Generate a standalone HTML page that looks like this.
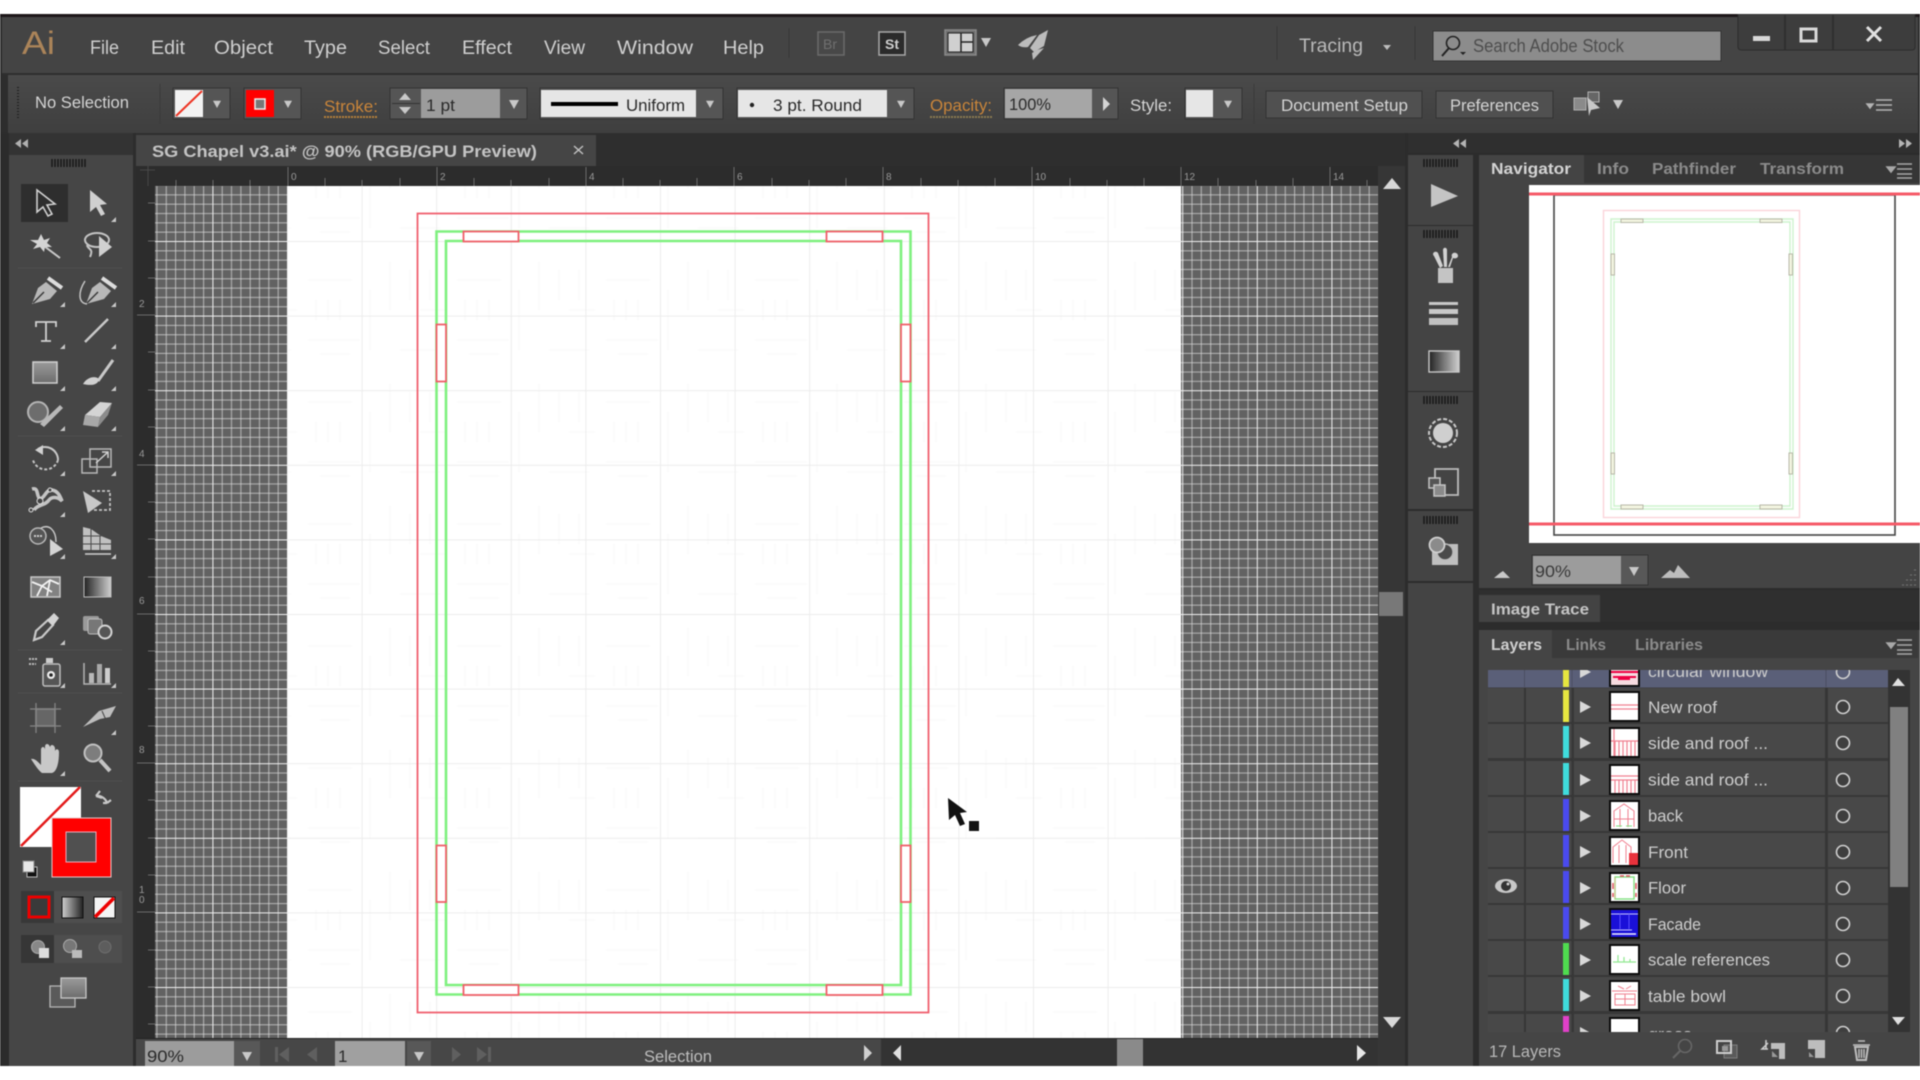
<!DOCTYPE html>
<html><head><meta charset="utf-8"><title>Illustrator</title>
<style>
html,body{margin:0;padding:0;background:#fff;width:1920px;height:1080px;overflow:hidden}
svg{position:absolute;left:0;top:0;filter:blur(.6px)}
text{font-family:"Liberation Sans",sans-serif}
.m{font-size:19px;fill:#cfcfcf}
.c{font-size:17px;fill:#d4d4d4}
.d{font-size:17px;fill:#2a2a2a}
.o{font-size:17px;fill:#c9853a}
.t{font-size:16px;font-weight:bold;fill:#8b8b8b}
.l{font-size:17px;fill:#cdcdcd}
.r{font-size:10px;fill:#999}
.s{fill:none;stroke:#c4c4c4;stroke-width:2}
</style></head><body>
<svg width="1920" height="1080" viewBox="0 0 1920 1080" xmlns="http://www.w3.org/2000/svg">
<defs>
<pattern id="pb" patternUnits="userSpaceOnUse" x="287" y="241" width="74.6" height="74.6">
<rect width="74.6" height="74.6" fill="#626262"/>
<g stroke="#dadada" stroke-width="1" stroke-opacity=".72">
<path d="M.5 0V75M9.8 0V75M19.1 0V75M28.5 0V75M37.8 0V75M47.1 0V75M56.4 0V75M65.8 0V75"/>
<path d="M0 .5H75M0 9.8H75M0 19.1H75M0 28.5H75M0 37.8H75M0 47.1H75M0 56.4H75M0 65.8H75"/>
</g>
<path d="M0 .5H75M.5 0V75" stroke="#f2f2f2" stroke-width="1"/>
</pattern>
<pattern id="ag" patternUnits="userSpaceOnUse" x="287" y="241" width="74.6" height="74.6">
<path d="M.5 0V75M0 .5H75" stroke="#ececec" stroke-width="1" fill="none"/>
</pattern>
<pattern id="ghost" patternUnits="userSpaceOnUse" x="300" y="250" width="149" height="122">
<path d="M8 30H52M8 90H60M90 12V60M120 60H146M100 100H140M70 40V100M16 50V70M28 50V70M40 50V70M110 20V50M130 20V50M20 104H50" stroke="#f9f9f9" stroke-width="1" fill="none"/>
</pattern>
<linearGradient id="gr" x1="0" x2="1"><stop offset="0" stop-color="#222"/><stop offset="1" stop-color="#cfcfcf"/></linearGradient>
<linearGradient id="rc" x1="0" y1="0" x2="0" y2="1"><stop offset="0" stop-color="#9a9a9a"/><stop offset="1" stop-color="#6d6d6d"/></linearGradient>
<linearGradient id="bar" x1="0" y1="0" x2="0" y2="1"><stop offset="0" stop-color="#4a4a4a"/><stop offset="1" stop-color="#3f3f3f"/></linearGradient>
<clipPath id="lc"><rect x="1488" y="670" width="400" height="362"/></clipPath>
<g id="tri"><path d="M0 0L5-5V0Z" fill="#c8c8c8"/></g>
<g id="arrw"><path d="M-5-4H5L0 5Z" fill="#c8c8c8"/></g>
<g id="grip"><path d="M0 0V8M3 0V8M6 0V8M9 0V8M12 0V8M15 0V8M18 0V8M21 0V8M24 0V8M27 0V8M30 0V8M33 0V8" stroke="#161616" stroke-width="1.4"/></g>
<g id="row">
<rect x="1488" y="0" width="36" height="34" fill="#484848"/>
<rect x="1526" y="0" width="46" height="34" fill="#484848"/>
<rect x="1574" y="0" width="251" height="34" fill="#484848"/>
<rect x="1828" y="0" width="60" height="34" fill="#484848"/>
<path d="M1580 13L1591 19L1580 25Z" fill="#d8d8d8"/>
<rect x="1609" y="3" width="31" height="31" fill="#0c0c0c"/>
<rect x="1611" y="5" width="27" height="27" fill="#fff"/>
<circle cx="1843" cy="19" r="6.5" fill="#3e3e3e" stroke="#d0d0d0" stroke-width="1.6"/>
</g>
</defs>

<rect width="1920" height="1080" fill="#fff"/>
<rect y="14" width="1920" height="1052" fill="#2d2d2d"/>
<rect y="14" width="1920" height="3" fill="#1d1719"/>

<!-- title bar -->
<rect x="2" y="17" width="1916" height="57" fill="#444"/>
<rect x="2" y="73" width="1916" height="1" fill="#2f2f2f"/>
<text x="22" y="54" font-size="32" fill="#ab8459" textLength="33" lengthAdjust="spacingAndGlyphs">Ai</text>
<text class="m" x="90" y="54" textLength="29" lengthAdjust="spacingAndGlyphs">File</text>
<text class="m" x="151" y="54" textLength="34" lengthAdjust="spacingAndGlyphs">Edit</text>
<text class="m" x="214" y="54" textLength="59" lengthAdjust="spacingAndGlyphs">Object</text>
<text class="m" x="304" y="54" textLength="43" lengthAdjust="spacingAndGlyphs">Type</text>
<text class="m" x="378" y="54" textLength="52" lengthAdjust="spacingAndGlyphs">Select</text>
<text class="m" x="462" y="54" textLength="50" lengthAdjust="spacingAndGlyphs">Effect</text>
<text class="m" x="544" y="54" textLength="41" lengthAdjust="spacingAndGlyphs">View</text>
<text class="m" x="617" y="54" textLength="76" lengthAdjust="spacingAndGlyphs">Window</text>
<text class="m" x="723" y="54" textLength="41" lengthAdjust="spacingAndGlyphs">Help</text>
<path d="M789 28V58M1277 26V60M1415 26V60" stroke="#383838" stroke-width="1"/>
<rect x="818" y="32" width="26" height="23" fill="#484848" stroke="#6a6a6a" stroke-width="1.5"/>
<text x="823" y="49" font-size="14" fill="#707070">Br</text>
<rect x="879" y="32" width="26" height="23" fill="#2b2b2b" stroke="#a8a8a8" stroke-width="1.5"/>
<text x="885" y="49" font-size="14" font-weight="bold" fill="#cfcfcf">St</text>
<rect x="945" y="30" width="31" height="25" fill="#6e6e6e" stroke="#8a8a8a" stroke-width="1.5"/>
<rect x="948" y="33" width="25" height="19" fill="#d0d0d0" stroke="#222" stroke-width="1"/>
<path d="M961 33V52M961 42H973" stroke="#222" stroke-width="1.5"/>
<use href="#arrw" x="986" y="42"/>
<path d="M1018 45Q1026 37 1037 35L1028 47Q1022 48 1018 45Z" fill="#bcbcbc"/>
<path d="M1048 30L1039 35L1030 48L1034 52L1044 46Z" fill="#bcbcbc"/>
<path d="M1044 48L1033 60L1032 53L1037 50Z" fill="#bcbcbc"/>
<text x="1299" y="52" font-size="19" fill="#b9b9b9" textLength="64" lengthAdjust="spacingAndGlyphs">Tracing</text>
<path d="M1383 45H1391L1387 50Z" fill="#bcbcbc"/>
<rect x="1433" y="31" width="288" height="30" fill="#8c8c8c" stroke="#333" stroke-width="1"/>
<circle cx="1453" cy="43" r="6.5" fill="none" stroke="#222" stroke-width="1.6"/><path d="M1449 48L1442 56" stroke="#222" stroke-width="2"/><path d="M1460 52H1466L1463 55Z" fill="#222"/>
<text x="1473" y="52" font-size="18" fill="#4e4e4e" textLength="151" lengthAdjust="spacingAndGlyphs">Search Adobe Stock</text>
<path d="M1738 14H1915V47Q1915 50 1912 50H1742Q1738 50 1738 47Z" fill="#3d3d3d" stroke="#2c2c2c"/>
<path d="M1785 15V50M1833 15V50" stroke="#2c2c2c" stroke-width="1.5"/>
<rect x="1753" y="36" width="17" height="5" fill="#d8d8d8"/>
<rect x="1801" y="29" width="15" height="12" fill="none" stroke="#d8d8d8" stroke-width="3"/>
<path d="M1867 27L1881 41M1881 27L1867 41" stroke="#e0e0e0" stroke-width="3"/>

<!-- control bar -->
<rect x="8" y="75" width="1910" height="58" fill="url(#bar)"/>
<path d="M18 87V120" stroke="#1e1e1e" stroke-width="2" stroke-dasharray="1 2"/>
<path d="M160 84V124M1254 84V124" stroke="#3a3a3a"/>
<text class="c" x="35" y="108" textLength="94" lengthAdjust="spacingAndGlyphs">No Selection</text>
<rect x="173" y="88" width="57" height="31" fill="#555" stroke="#333"/>
<rect x="175" y="90" width="28" height="27" fill="#f2f2f2"/>
<path d="M176 116L202 91" stroke="#e32" stroke-width="2"/>
<use href="#arrw" x="217" y="104" transform="translate(43.4 20.8) scale(.8)"/>
<rect x="244" y="88" width="57" height="31" fill="#555" stroke="#333"/>
<rect x="246" y="90" width="28" height="27" fill="#f00"/>
<rect x="255" y="99" width="10" height="10" fill="#777" stroke="#eee" stroke-width="1.5"/>
<use href="#arrw" x="288" y="104" transform="translate(57.6 20.8) scale(.8)"/>
<text class="o" x="324" y="112" textLength="54" lengthAdjust="spacingAndGlyphs">Stroke:</text>
<path d="M324 117H378" stroke="#b5803a" stroke-width="2" stroke-dasharray="2 1"/>
<rect x="390" y="88" width="137" height="31" fill="#555" stroke="#333"/>
<path d="M399 100L405 93L411 100ZM399 107L405 114L411 107Z" fill="#c8c8c8"/>
<path d="M392 103.500H420" stroke="#333"/>
<rect x="421" y="89" width="79" height="29" fill="#9c9c9c"/>
<text class="d" x="426" y="111" textLength="29" lengthAdjust="spacingAndGlyphs">1 pt</text>
<use href="#arrw" x="514" y="104"/>
<rect x="540" y="88" width="183" height="31" fill="#555" stroke="#333"/>
<rect x="541" y="90" width="155" height="27" fill="#e6e6e6"/>
<rect x="551" y="102" width="67" height="4" fill="#000"/>
<text class="d" x="626" y="111" textLength="59" lengthAdjust="spacingAndGlyphs">Uniform</text>
<use href="#arrw" x="710" y="104" transform="translate(142 20.800) scale(.8)"/>
<rect x="737" y="88" width="177" height="31" fill="#555" stroke="#333"/>
<rect x="738" y="90" width="149" height="27" fill="#e6e6e6"/>
<circle cx="752" cy="105" r="2.2" fill="#222"/>
<text class="d" x="773" y="111" textLength="89" lengthAdjust="spacingAndGlyphs">3 pt. Round</text>
<use href="#arrw" x="901" y="104" transform="translate(180.200 20.800) scale(.8)"/>
<text class="o" x="930" y="111" textLength="62" lengthAdjust="spacingAndGlyphs">Opacity:</text>
<path d="M930 117H992" stroke="#8a7a50" stroke-width="2" stroke-dasharray="2 1"/>
<rect x="1004" y="88" width="114" height="31" fill="#555" stroke="#333"/>
<rect x="1005" y="89" width="87" height="29" fill="#a6a6a6"/>
<text class="d" x="1009" y="110" textLength="42" lengthAdjust="spacingAndGlyphs">100%</text>
<path d="M1103 97L1110 104L1103 111Z" fill="#d4d4d4"/>
<text class="c" x="1130" y="111" textLength="42" lengthAdjust="spacingAndGlyphs">Style:</text>
<rect x="1185" y="88" width="57" height="31" fill="#555" stroke="#333"/>
<rect x="1186" y="90" width="27" height="27" fill="#e6e6e6"/>
<use href="#arrw" x="1228" y="104" transform="translate(245.600 20.800) scale(.8)"/>
<rect x="1266" y="91" width="156" height="27" fill="#505050" stroke="#333"/>
<text class="c" x="1281" y="111" textLength="127" lengthAdjust="spacingAndGlyphs">Document Setup</text>
<rect x="1436" y="91" width="117" height="27" fill="#505050" stroke="#333"/>
<text class="c" x="1450" y="111" textLength="89" lengthAdjust="spacingAndGlyphs">Preferences</text>
<rect x="1574" y="98" width="12" height="12" fill="#8a8a8a" stroke="#b0b0b0"/>
<rect x="1588" y="92" width="11" height="10" fill="#666" stroke="#b0b0b0"/>
<path d="M1587 97L1600 108L1591 110L1589 116Z" fill="#c8c8c8"/>
<use href="#arrw" x="1618" y="104"/>
<path d="M1867 104H1873L1870 108ZM1876 100H1892M1876 105H1892M1876 110H1892" stroke="#b4b4b4" fill="#b4b4b4" stroke-width="1.500"/>

<!-- dark strip & tool bar -->
<rect y="133" width="1920" height="33" fill="#2e2e2e"/>
<rect x="0" y="133" width="9" height="933" fill="#2b2b2b"/>
<rect x="9" y="133" width="124" height="22" fill="#333"/>
<path d="M21 139L15 143.500L21 148ZM28 139L22 143.500L28 148Z" fill="#b0b0b0"/>
<rect x="9" y="155" width="124" height="911" fill="#464646"/>
<rect x="133" y="133" width="3" height="933" fill="#2d2d2d"/>
<use href="#grip" transform="translate(52 159)"/>
<path d="M18 268H122M18 436H122M18 650H122M18 693H122M18 781H122" stroke="#505050"/>
<rect x="21" y="184" width="47" height="38" fill="#2e2e2e"/>

<!-- tools -->
<g>
<path d="M37 190V212L43 207L48 216L52 214L47 205L55 204Z" fill="#2e2e2e" stroke="#d0d0d0" stroke-width="1.600"/>
<path d="M90 190V212L96 207L101 216L105 214L100 205L107 204Z" fill="#d0d0d0"/>
<path d="M44 246L60 258" stroke="#c8c8c8" stroke-width="2"/>
<path d="M41 234L44 240L50 238L47 243L52 247L45 247L44 252L40 247L33 249L37 244L30 240L38 240Z" fill="#d4d4d4"/>
<ellipse cx="97" cy="240" rx="12" ry="7" class="s"/>
<path d="M87 245C88 250 94 248 90 257" class="s"/>
<path d="M99 236V257L112 247Z" fill="#d0d0d0"/>
<path d="M32 304L38 288L46 282L57 291L50 299Z" fill="#b8b8b8"/><path d="M33 303L44 292" stroke="#3a3a3a" stroke-width="1.500"/><path d="M48 278L62 288" stroke="#ddd" stroke-width="4"/>
<path d="M86 304L92 288L100 282L111 291L104 299Z" fill="#b8b8b8"/><path d="M87 303L98 292" stroke="#3a3a3a" stroke-width="1.500"/><path d="M102 278L116 288" stroke="#ddd" stroke-width="4"/><path d="M85 281C78 292 78 303 87 304" fill="none" stroke="#c4c4c4" stroke-width="1.500"/>
<path d="M36 327V322H56V327M46 322V341M41 341H51" fill="none" stroke="#d0d0d0" stroke-width="1.800"/>
<path d="M85 342L108 319" stroke="#c8c8c8" stroke-width="2.500"/>
<rect x="33" y="362" width="24" height="21" fill="url(#rc)" stroke="#d0d0d0" stroke-width="1.500"/>
<path d="M98 381L113 360" stroke="#c8c8c8" stroke-width="3"/><path d="M83 384C88 376 96 376 99 379C98 385 92 386 83 384Z" fill="#d0d0d0"/>
<circle cx="38" cy="412" r="10" fill="#6d6d6d" stroke="#b4b4b4" stroke-width="2"/>
<path d="M40 424L60 405L63 408L44 427Z" fill="#b8b8b8"/>
<path d="M85 415L100 402L112 403L100 417Z" fill="#d4d4d4"/>
<path d="M85 415L100 417L98 427L83 425Z" fill="#a8a8a8"/>
<path d="M100 417L112 403L108 415L98 427Z" fill="#8c8c8c"/>
<path d="M38 449A13 13 0 0 1 58 460" fill="none" stroke="#c8c8c8" stroke-width="2"/>
<path d="M43 445L35 450L43 455Z" fill="#d0d0d0"/>
<path d="M58 460A13 13 0 0 1 33 460" fill="none" stroke="#c4c4c4" stroke-width="2" stroke-dasharray="3 2"/>
<rect x="90" y="449" width="21" height="18" fill="none" stroke="#b8b8b8" stroke-width="1.500"/>
<rect x="82" y="459" width="15" height="14" fill="none" stroke="#b8b8b8" stroke-width="1.500"/>
<path d="M96 463L108 452M102 452H108V458" stroke="#d0d0d0" fill="none" stroke-width="1.500"/>
<path d="M32 489C39 487 36 496 40 499C45 498 46 489 52 490C58 491 60 496 62 501C58 497 52 496 49 500C45 506 38 504 34 510" fill="none" stroke="#c4c4c4" stroke-width="3.500"/>
<circle cx="40" cy="501" r="3" fill="#444" stroke="#ddd"/><circle cx="31" cy="510" r="2" fill="#444" stroke="#ddd"/><circle cx="50" cy="490" r="2" fill="#444" stroke="#ddd"/>
<path d="M83 491L102 503L88 513Z" fill="#c8c8c8"/>
<path d="M92 491H110V510H94" fill="none" stroke="#c4c4c4" stroke-width="1.800" stroke-dasharray="3 2"/>
<circle cx="38" cy="536" r="8" fill="#555" stroke="#b8b8b8" stroke-width="1.500"/>
<path d="M34 536h8" stroke="#ccc" stroke-width="2" stroke-dasharray="2 1"/>
<path d="M41 528C49 524 56 530 56 542" fill="none" stroke="#c4c4c4" stroke-width="1.500"/>
<path d="M50 539V556L63 549Z" fill="#d4d4d4"/>
<path d="M83 527L91 529L101 536L111 540V550H83Z" fill="#c0c0c0"/>
<path d="M91 529V550M100 536V550M83 536H101M83 544H111" stroke="#4a4a4a"/>
<path d="M85 554H111" stroke="#d0d0d0" stroke-width="1.500"/>
<rect x="31" y="577" width="29" height="20" fill="#828282" stroke="#c8c8c8" stroke-width="1.500"/>
<path d="M32 582L42 586L37 596M42 586L50 580L59 584M50 580L47 596M42 586L52 592" stroke="#f2f2f2" fill="none" stroke-width="1.800"/>
<rect x="84" y="577" width="27" height="20" fill="url(#gr)" stroke="#bcbcbc"/>
<path d="M34 640L36 631L48 620L53 625L42 637Z" fill="none" stroke="#c8c8c8" stroke-width="2.200"/>
<path d="M47 620L54 613L59 618L53 626Z" fill="#d4d4d4"/>
<rect x="83" y="616" width="16" height="15" rx="2" fill="#9a9a9a"/>
<rect x="88" y="619" width="14" height="15" rx="2" fill="#777" stroke="#bbb"/>
<circle cx="105" cy="632" r="6.500" fill="#555" stroke="#d4d4d4" stroke-width="2"/>
<path d="M29 659H38M29 664H36" stroke="#bbb" stroke-width="2" stroke-dasharray="2 1"/>
<rect x="46" y="658" width="7" height="5" fill="#ccc"/>
<rect x="43" y="664" width="17" height="22" rx="2" fill="#555" stroke="#bdbdbd" stroke-width="1.500"/>
<circle cx="51" cy="675" r="4" fill="#eee"/><circle cx="51" cy="675" r="1.800" fill="#222"/>
<path d="M84 663V684H111" fill="none" stroke="#b4b4b4" stroke-width="1.500"/>
<rect x="89" y="673" width="5" height="10" fill="#b8b8b8"/><rect x="97" y="664" width="5" height="19" fill="#a8a8a8"/><rect x="105" y="668" width="5" height="15" fill="#cdcdcd"/>
<rect x="36" y="709" width="19" height="17" fill="#666" stroke="#999" stroke-width="1.400"/>
<path d="M36 703V733M55 703V733M30 709H61M30 726H61" stroke="#848484" stroke-width="1.300"/>
<path d="M83 727L99 711L116 706L110 717L100 719Z" fill="#bdbdbd"/><path d="M102 711L106 720" stroke="#444"/>
<path d="M31 759C35 758 38 762 41 765V750C41 746 45 746 45 750V758V747C45 743 49 743 50 747V758V748C50 744 54 744 55 748V758V751C56 748 59 749 59 752C59 765 56 772 52 773H42C38 770 35 765 31 759Z" fill="#c8c8c8"/>
<circle cx="93" cy="753" r="8.500" fill="#7d7d7d" stroke="#c0c0c0" stroke-width="2"/>
<path d="M100 760L110 771" stroke="#c4c4c4" stroke-width="4"/>
</g>
<g>
<use href="#tri" x="111" y="222"/><use href="#tri" x="60" y="307"/><use href="#tri" x="111" y="307"/>
<use href="#tri" x="60" y="349"/><use href="#tri" x="111" y="349"/><use href="#tri" x="60" y="391"/><use href="#tri" x="111" y="391"/>
<use href="#tri" x="60" y="431"/><use href="#tri" x="111" y="431"/><use href="#tri" x="60" y="476"/><use href="#tri" x="111" y="476"/>
<use href="#tri" x="60" y="517"/><use href="#tri" x="60" y="559"/><use href="#tri" x="111" y="559"/>
<use href="#tri" x="60" y="645"/><use href="#tri" x="60" y="688"/><use href="#tri" x="111" y="688"/><use href="#tri" x="111" y="735"/><use href="#tri" x="60" y="776"/>
</g>

<!-- fill / stroke -->
<rect x="20" y="787" width="61" height="60" fill="#fff"/>
<path d="M21 846L80 787" stroke="#e31a1a" stroke-width="2.500"/>
<rect x="52" y="818" width="59" height="59" fill="#f00" stroke="#e8c8c8" stroke-width="1"/>
<rect x="66" y="832" width="30" height="30" fill="#505050" stroke="#eab" stroke-width="1"/>
<path d="M96 796C101 795 106 799 107 803M96 796L100 791M96 796L102 798M107 803L103 803M107 803L111 800" fill="none" stroke="#c8c8c8" stroke-width="2.200"/>
<rect x="27" y="867" width="10" height="10" fill="#111" stroke="#bbb"/>
<rect x="23" y="861" width="11" height="11" fill="#e8e8e8" stroke="#888"/>
<rect x="21" y="891" width="101" height="32" fill="#4e4e4e"/>
<rect x="21" y="891" width="33" height="32" fill="#383838"/>
<rect x="29" y="897" width="20" height="20" fill="#3a3a3a" stroke="#e00" stroke-width="3"/>
<rect x="62" y="897" width="21" height="21" fill="url(#gr)" stroke="#111" transform="rotate(180 72.500 907.500)"/>
<rect x="94" y="897" width="21" height="21" fill="#f4f4f4" stroke="#111"/>
<path d="M95 917L114 898" stroke="#e00" stroke-width="3.500"/>
<rect x="21" y="935" width="101" height="28" fill="#4e4e4e"/>
<rect x="21" y="935" width="33" height="28" fill="#363636"/>
<circle cx="38" cy="947" r="6.500" fill="#888" stroke="#aaa"/>
<rect x="39" y="948" width="10" height="10" fill="#ddd"/>
<circle cx="70" cy="946" r="6.500" fill="#777" stroke="#aaa"/>
<rect x="72" y="950" width="10" height="8" fill="#bbb"/>
<circle cx="105" cy="947" r="6" fill="#5d5d5d" stroke="#6e6e6e"/>
<path d="M61 986H50V1007H75V998" fill="#5a5a5a" stroke="#b8b8b8" stroke-width="1.300"/>
<rect x="61" y="978" width="25" height="20" fill="url(#rc)" stroke="#c8c8c8" stroke-width="1.300"/>

<!-- document tab -->
<rect x="136" y="135" width="460" height="31" fill="#454545"/>
<text x="152" y="157" font-size="16.500" font-weight="bold" fill="#c4c4c4" textLength="385" lengthAdjust="spacingAndGlyphs">SG Chapel v3.ai* @ 90% (RGB/GPU Preview)</text>
<path d="M574 146L583 154M583 146L574 154" stroke="#c0c0c0" stroke-width="1.500"/>

<!-- rulers -->
<rect x="136" y="166" width="1242" height="20" fill="#2c2c2c"/>
<rect x="136" y="166" width="19" height="872" fill="#2c2c2c"/>
<path d="M140 170H155M148 166V186" stroke="#484848"/>
<g stroke="#6c6c6c" stroke-width="1">
<path d="M288 167V186M437 167V186M586 167V186M734 167V186M883 167V186M1032 167V186M1181 167V186M1330 167V186"/>
<path d="M176 180V186M213 180V186M250 180V186M325 178V186M362 180V186M400 178V186M474 178V186M511 180V186M549 178V186M623 178V186M660 180V186M697 178V186M772 178V186M809 180V186M846 178V186M921 178V186M958 180V186M995 178V186M1070 178V186M1107 180V186M1144 178V186M1218 178V186M1256 180V186M1293 178V186M1367 180V186"/>
<path d="M137 315H155M137 465H155M137 614H155M137 763H155M137 912H155"/>
<path d="M148 203H155M148 241H155M148 278H155M148 352H155M148 390H155M148 427H155M148 502H155M148 539H155M148 577H155M148 651H155M148 689H155M148 726H155M148 800H155M148 838H155M148 875H155M148 950H155M148 987H155M148 1024H155"/>
</g>
<g>
<text class="r" x="291" y="180">0</text><text class="r" x="440" y="180">2</text><text class="r" x="589" y="180">4</text><text class="r" x="737" y="180">6</text><text class="r" x="886" y="180">8</text><text class="r" x="1035" y="180">10</text><text class="r" x="1184" y="180">12</text><text class="r" x="1333" y="180">14</text>
<text class="r" x="139" y="307">2</text><text class="r" x="139" y="457">4</text><text class="r" x="139" y="604">6</text><text class="r" x="139" y="753">8</text><text class="r" x="139" y="893">1</text><text class="r" x="139" y="903">0</text>
</g>

<!-- pasteboard & artboard -->
<rect x="155" y="186" width="1223" height="852" fill="url(#pb)"/>
<rect x="288" y="186" width="893" height="852" fill="#fff"/>
<rect x="288" y="186" width="893" height="852" fill="url(#ghost)"/>
<rect x="288" y="186" width="893" height="852" fill="url(#ag)"/>
<rect x="417.500" y="213.500" width="511" height="799" fill="none" stroke="#f0606e" stroke-width="1.800"/>
<path d="M436.500 231.500H910.500V994.500H436.500Z" fill="none" stroke="#7ff07f" stroke-width="2.600"/>
<path d="M446 241H901V985H446Z" fill="none" stroke="#7ff07f" stroke-width="2.600"/>
<g fill="#fff" stroke="#f05f6a" stroke-width="1.800">
<rect x="463.500" y="231.500" width="55" height="10"/><rect x="826.500" y="231.500" width="56" height="10"/>
<rect x="463.500" y="985" width="55" height="10"/><rect x="826.500" y="985" width="56" height="10"/>
<rect x="436.500" y="324.500" width="9.500" height="57"/><rect x="901" y="324.500" width="9.500" height="57"/>
<rect x="436.500" y="845.500" width="9.500" height="56.500"/><rect x="901" y="845.500" width="9.500" height="56.500"/>
</g>
<path d="M948 798L949 820L955 815L960 826L965 824L960 813L967 812Z" fill="#111"/>
<rect x="969" y="821" width="10" height="10" fill="#111"/>

<!-- scroll right -->
<rect x="1378" y="166" width="27" height="900" fill="#363636"/>
<path d="M1383 189L1392 178L1401 189Z" fill="#d8d8d8"/>
<path d="M1383 1017L1392 1028L1401 1017Z" fill="#d8d8d8"/>
<rect x="1379" y="592" width="24" height="24" fill="#787878"/>

<!-- status bar -->
<rect x="136" y="1038" width="745" height="28" fill="#474747"/>
<rect x="136" y="1038" width="1242" height="1" fill="#222"/>
<rect x="145" y="1041" width="89" height="25" fill="#9c9c9c"/>
<text class="d" x="147" y="1062" textLength="37" lengthAdjust="spacingAndGlyphs">90%</text>
<rect x="234" y="1041" width="26" height="25" fill="#585858"/>
<use href="#arrw" x="247" y="1056"/>
<path d="M275 1047H278V1062H275ZM289 1047V1062L279 1054.500ZM317 1047V1062L307 1054.500Z" fill="#5f5f5f"/>
<rect x="335" y="1041" width="70" height="25" fill="#a0a0a0"/>
<text class="d" x="338" y="1062">1</text>
<rect x="407" y="1041" width="24" height="25" fill="#585858"/>
<use href="#arrw" x="419" y="1056"/>
<path d="M452 1047V1062L461 1054.500ZM477 1047V1062L487 1054.500ZM488 1047H491V1062H488Z" fill="#5f5f5f"/>
<text x="644" y="1062" font-size="17" fill="#bdbdbd" textLength="68" lengthAdjust="spacingAndGlyphs">Selection</text>
<path d="M864 1045L872 1053L864 1061Z" fill="#d0d0d0"/>
<rect x="881" y="1039" width="497" height="27" fill="#333"/>
<path d="M901 1045L893 1053L901 1061Z" fill="#e0e0e0"/>
<rect x="1117" y="1039" width="26" height="27" fill="#8a8a8a"/>
<path d="M1357 1045L1366 1053L1357 1061Z" fill="#e8e8e8"/>

<!-- right dock -->
<rect x="1405" y="133" width="515" height="933" fill="#2c2c2c"/>
<rect x="1408" y="133" width="512" height="20" fill="#2f2f2f"/>
<path d="M1459 139L1453 143.500L1459 148ZM1466 139L1460 143.500L1466 148Z" fill="#b4b4b4"/>
<path d="M1899 139L1905 143.500L1899 148ZM1906 139L1912 143.500L1906 148Z" fill="#b4b4b4"/>
<rect x="1408" y="155" width="65" height="70" fill="#444"/>
<rect x="1408" y="226" width="65" height="165" fill="#444"/>
<rect x="1408" y="392" width="65" height="117" fill="#444"/>
<rect x="1408" y="511" width="65" height="70" fill="#444"/>
<rect x="1408" y="583" width="65" height="483" fill="#444"/>
<use href="#grip" transform="translate(1424 159)"/><use href="#grip" transform="translate(1424 230)"/><use href="#grip" transform="translate(1424 396)"/><use href="#grip" transform="translate(1424 516)"/>
<path d="M1431 184L1458 196L1431 207Z" fill="#c4c4c4"/>
<path d="M1438 268H1453V283H1438Z" fill="#c4c4c4"/>
<path d="M1440 268L1434 256C1431 253 1436 250 1438 253L1443 266ZM1444 267L1443 250C1443 247 1447 247 1447 250L1447 267ZM1448 267L1452 257C1450 252 1458 251 1458 256C1458 258 1455 259 1453 258L1450 267Z" fill="#d2d2d2"/>
<rect x="1429" y="302" width="29" height="3" fill="#c8c8c8"/><rect x="1429" y="309" width="29" height="5" fill="#c8c8c8"/><rect x="1429" y="318" width="29" height="7" fill="#c0c0c0"/>
<rect x="1429" y="351" width="30" height="21" fill="url(#gr)" stroke="#c8c8c8" stroke-width="1.400"/>
<circle cx="1443" cy="433" r="10" fill="#cfcfcf"/><circle cx="1443" cy="433" r="14" fill="none" stroke="#c8c8c8" stroke-width="2" stroke-dasharray="4 2"/>
<path d="M1435 483V469H1458V495H1442" fill="none" stroke="#bcbcbc" stroke-width="1.800"/>
<rect x="1429" y="478" width="11" height="10" fill="#555" stroke="#c4c4c4" stroke-width="1.500"/>
<rect x="1434" y="485" width="11" height="11" fill="#8a8a8a" stroke="#c4c4c4" stroke-width="1.500"/>
<rect x="1432" y="544" width="26" height="21" fill="#bfbfbf"/>
<circle cx="1445" cy="552" r="8" fill="#4a4a4a" stroke="#bbb" stroke-width="1.500"/>
<circle cx="1437" cy="545" r="7.500" fill="#8b8b8b" stroke="#cfcfcf" stroke-width="1.800"/>

<!-- navigator -->
<rect x="1479" y="155" width="441" height="433" fill="#444"/>
<rect x="1584" y="155" width="336" height="28" fill="#363636"/>
<text x="1491" y="174" font-size="16" font-weight="bold" fill="#d4d4d4" textLength="80" lengthAdjust="spacingAndGlyphs">Navigator</text>
<text class="t" x="1597" y="174" textLength="32" lengthAdjust="spacingAndGlyphs">Info</text>
<text class="t" x="1652" y="174" textLength="84" lengthAdjust="spacingAndGlyphs">Pathfinder</text>
<text class="t" x="1760" y="174" textLength="84" lengthAdjust="spacingAndGlyphs">Transform</text>
<path d="M1887 167H1895L1891 172ZM1897 164H1912M1897 169H1912M1897 174H1912M1897 178H1912" fill="#a8a8a8" stroke="#a8a8a8" stroke-width="1.500"/>
<rect x="1529" y="185" width="391" height="358" fill="#fff"/>
<rect x="1554" y="195" width="341" height="340" fill="none" stroke="#444" stroke-width="1.600"/>
<path d="M1529 194H1920M1529 524H1920" stroke="#f55a68" stroke-width="3"/>
<rect x="1603.500" y="210.500" width="196" height="307" fill="none" stroke="#fbd4da" stroke-width="1.400"/>
<path d="M1611 219H1793V509H1611ZM1614 222H1790V506H1614Z" fill="none" stroke="#cdf3cd" stroke-width="1.400"/>
<g fill="#f2f4e0" stroke="#b8b8a8"><rect x="1621" y="219" width="22" height="3.500"/><rect x="1760" y="219" width="22" height="3.500"/><rect x="1621" y="505" width="22" height="4"/><rect x="1760" y="505" width="22" height="4"/><rect x="1611" y="254" width="3.500" height="21"/><rect x="1789" y="254" width="3.500" height="21"/><rect x="1611" y="453" width="3.500" height="21"/><rect x="1789" y="453" width="3.500" height="21"/></g>
<path d="M1494 578L1500 573L1503 571L1510 578Z" fill="#c8c8c8"/>
<rect x="1532" y="555" width="116" height="30" fill="#585858" stroke="#333"/>
<rect x="1533" y="556" width="88" height="28" fill="#9c9c9c"/>
<text x="1535" y="577" font-size="17" fill="#3a3a3a" textLength="36" lengthAdjust="spacingAndGlyphs">90%</text>
<use href="#arrw" x="1634" y="571"/>
<path d="M1661 578L1670 570L1674 573L1678 565L1690 578Z" fill="#bdbdbd"/>
<path d="M1902 585h2M1906 585h2M1910 585h2M1906 580h2M1910 580h2M1910 575h2M1914 585h2M1914 580h2M1914 575h2M1914 570h2" stroke="#777"/>

<!-- image trace -->
<rect x="1479" y="590" width="441" height="32" fill="#2f2f2f"/>
<rect x="1479" y="595" width="121" height="27" fill="#434343"/>
<text x="1491" y="614.500" font-size="16" font-weight="bold" fill="#c4c4c4" textLength="98" lengthAdjust="spacingAndGlyphs">Image Trace</text>

<!-- layers -->
<rect x="1479" y="630" width="441" height="436" fill="#454545"/>
<rect x="1552" y="630" width="366" height="28" fill="#3a3a3a"/>
<text x="1491" y="650" font-size="16" font-weight="bold" fill="#cfcfcf" textLength="51" lengthAdjust="spacingAndGlyphs">Layers</text>
<text class="t" x="1566" y="650" textLength="40" lengthAdjust="spacingAndGlyphs">Links</text>
<text class="t" x="1635" y="650" textLength="68" lengthAdjust="spacingAndGlyphs">Libraries</text>
<path d="M1887 643H1895L1891 648ZM1897 640H1912M1897 645H1912M1897 650H1912M1897 654H1912" fill="#a8a8a8" stroke="#a8a8a8" stroke-width="1.500"/>
<rect x="1488" y="670" width="400" height="362" fill="#383838"/>
<g clip-path="url(#lc)">
<g transform="translate(0 653)"><rect x="1488" y="0" width="400" height="34.500" fill="#5a5f78"/><path d="M1524.500 0V34M1572 0V34M1826 0V34" stroke="#4a4e62"/>
<path d="M1580 13L1591 19L1580 25Z" fill="#d8d8d8"/><rect x="1609" y="3" width="31" height="31" fill="#0c0c0c"/><rect x="1611" y="5" width="27" height="27" fill="#f6dbe0"/><path d="M1611 19H1638M1613 24H1636M1618 26h12" stroke="#e04" stroke-width="2"/><rect x="1563" y="2" width="6" height="32" fill="#e6e640"/><circle cx="1843" cy="19" r="6.500" fill="none" stroke="#d0d0d0" stroke-width="1.600"/>
<text class="l" x="1648" y="24" textLength="120" lengthAdjust="spacingAndGlyphs">circular window</text></g>
<g transform="translate(0 688)"><use href="#row"/><rect x="1563" y="2" width="6" height="32" fill="#e6e640"/><path d="M1611 17H1638M1611 21H1638" stroke="#f08090" stroke-width="1.200"/><text class="l" x="1648" y="25" textLength="69" lengthAdjust="spacingAndGlyphs">New roof</text></g>
<g transform="translate(0 724)"><use href="#row"/><rect x="1563" y="2" width="6" height="32" fill="#3fdcdc"/><path d="M1611 17H1638M1615 17V32M1619 17V32M1623 17V32M1627 17V32M1631 17V32M1635 17V32M1614 5V32" stroke="#f08090" stroke-width="1.200"/><text class="l" x="1648" y="25" textLength="120" lengthAdjust="spacingAndGlyphs">side and roof ...</text></g>
<g transform="translate(0 761)"><use href="#row"/><rect x="1563" y="2" width="6" height="32" fill="#3fdcdc"/><path d="M1611 15H1638M1615 19V32M1619 19V32M1623 19V32M1627 19V32M1631 19V32M1635 19V32M1611 19H1638" stroke="#f08090" stroke-width="1.200"/><text class="l" x="1648" y="24.500" textLength="120" lengthAdjust="spacingAndGlyphs">side and roof ...</text></g>
<g transform="translate(0 797)"><use href="#row"/><rect x="1563" y="2" width="6" height="32" fill="#4a4aee"/><path d="M1614 30V14L1624 7L1634 14V30M1620 30V12M1628 30V12M1614 22H1634" stroke="#f08090" stroke-width="1" fill="none"/><path d="M1616 29h6M1626 29h6" stroke="#80e080"/><text class="l" x="1648" y="24.500" textLength="35" lengthAdjust="spacingAndGlyphs">back</text></g>
<g transform="translate(0 833)"><use href="#row"/><rect x="1563" y="2" width="6" height="32" fill="#4a4aee"/><path d="M1613 30V14L1622 7L1631 14V30M1619 30V12M1626 30V12" stroke="#f08090" stroke-width="1" fill="none"/><rect x="1629" y="20" width="9" height="12" fill="#e8323c"/><text class="l" x="1648" y="25" textLength="40" lengthAdjust="spacingAndGlyphs">Front</text></g>
<g transform="translate(0 869)"><use href="#row"/><rect x="1563" y="2" width="6" height="32" fill="#4a4aee"/><rect x="1615" y="8" width="19" height="22" fill="none" stroke="#80e080" stroke-width="1.400"/><path d="M1613 14V20M1636 14V20M1613 24V28M1636 24V28M1620 7H1624M1626 7H1630" stroke="#e05060" stroke-width="1.500"/><path d="M1615 8V30" stroke="#c8c080"/><text class="l" x="1648" y="24.500" textLength="38" lengthAdjust="spacingAndGlyphs">Floor</text></g>
<g transform="translate(0 905)"><use href="#row"/><rect x="1563" y="2" width="6" height="32" fill="#4a4aee"/><rect x="1611" y="5" width="27" height="27" fill="#1a10d8"/><path d="M1611 9H1638M1611 25H1632" stroke="#c8c8ff"/><path d="M1620 9V24M1629 9V24" stroke="#5a50ff"/><path d="M1612 29H1636" stroke="#f4f4ff" stroke-width="1.500"/><text class="l" x="1648" y="25" textLength="53" lengthAdjust="spacingAndGlyphs">Facade</text></g>
<g transform="translate(0 941)"><use href="#row"/><rect x="1563" y="2" width="6" height="32" fill="#4fdc4f"/><path d="M1613 21H1636M1618 14V21M1624 16V21M1630 18V21" stroke="#90e890" stroke-width="1.200"/><text class="l" x="1648" y="24.500" textLength="122" lengthAdjust="spacingAndGlyphs">scale references</text></g>
<g transform="translate(0 977)"><use href="#row"/><rect x="1563" y="2" width="6" height="32" fill="#3fdcdc"/><path d="M1612 14H1637M1615 17H1635V28H1615ZM1625 17V28M1615 22H1635M1618 9L1624 12M1631 9L1626 12" stroke="#f08090" stroke-width="1" fill="none"/><text class="l" x="1648" y="25" textLength="78" lengthAdjust="spacingAndGlyphs">table bowl</text></g>
<g transform="translate(0 1014)"><use href="#row"/><rect x="1563" y="2" width="6" height="32" fill="#e040c8"/><text class="l" x="1648" y="26" textLength="44" lengthAdjust="spacingAndGlyphs">grass</text></g>
</g>
<path d="M1524.500 688V1032M1572 688V1032M1826 688V1032" stroke="#353535"/>
<rect x="1888" y="670" width="22" height="362" fill="#333"/>
<path d="M1892 686L1898 678L1905 686Z" fill="#e0e0e0"/>
<path d="M1892 1017L1898 1025L1905 1017Z" fill="#e0e0e0"/>
<rect x="1890" y="707" width="18" height="180" fill="#808080"/>
<ellipse cx="1506" cy="886" rx="11" ry="7" fill="#c8c8c8"/><circle cx="1506" cy="886" r="5" fill="#333"/><circle cx="1508" cy="884" r="1.500" fill="#ccc"/>
<text x="1489" y="1057" font-size="17" fill="#b8b8b8" textLength="72" lengthAdjust="spacingAndGlyphs">17 Layers</text>
<circle cx="1685" cy="1046" r="6.500" fill="none" stroke="#666" stroke-width="1.600"/><path d="M1680 1051L1673 1058" stroke="#666" stroke-width="2"/>
<rect x="1724" y="1045" width="13" height="13" fill="#5a5a5a" stroke="#7d7d7d"/>
<rect x="1717" y="1041" width="14" height="12" fill="none" stroke="#cfcfcf" stroke-width="2"/>
<rect x="1722" y="1046" width="6" height="5" fill="#999"/>
<path d="M1768 1043L1762 1049H1768M1766 1040V1049" fill="none" stroke="#cfcfcf" stroke-width="1.500"/>
<path d="M1771 1043H1785V1059H1779V1049H1771Z" fill="#bdbdbd"/><path d="M1772 1051L1778 1057H1772Z" fill="#999"/>
<path d="M1808 1040H1825V1058H1815V1049H1808Z" fill="#bdbdbd"/><path d="M1809 1052L1814 1057H1809Z" fill="#999"/>
<path d="M1855 1047H1868L1866 1060H1857Z" fill="none" stroke="#bdbdbd" stroke-width="2"/>
<path d="M1853 1045H1870M1858 1041H1865M1859 1049V1058M1861.500 1049V1058M1864 1049V1058" stroke="#bdbdbd" stroke-width="1.500"/>

<!-- letterbox -->
<rect y="1066" width="1920" height="14" fill="#fff"/>
<rect y="0" width="1920" height="14" fill="#fff"/>
</svg>
</body></html>
